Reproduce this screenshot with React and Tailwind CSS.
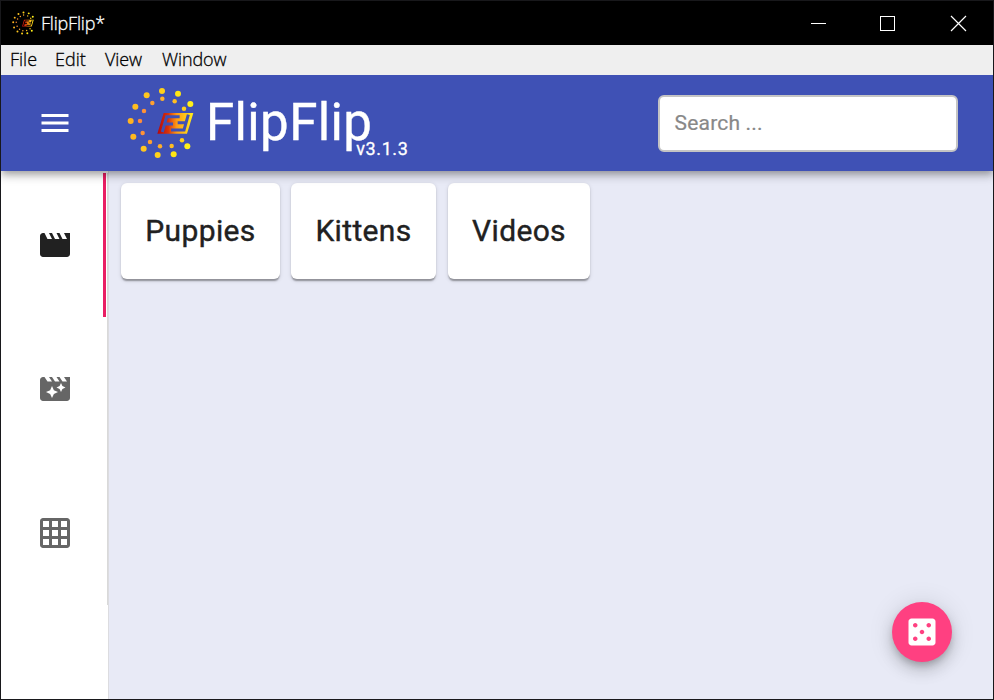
const OUTER = [[156, 39, '#ffd11a'], [204, 47, '#ffe614'], [241, 78, '#fff01a'], [232, 205, '#fff01a'], [191, 229, '#ffe614'], [143, 231, '#ffd11a'], [101, 212, '#ffc61f'], [70, 176, '#ffb91f'], [62, 129, '#ffb320'], [76, 86, '#ffbc1f'], [110, 52, '#ffc61f']];
const INNER = [[157, 62, '#ffb32a'], [194, 70, '#ffbe22'], [222, 92, '#ffd01c'], [216, 187, '#ffd01c'], [185, 204, '#ffbe22'], [150, 205, '#ffae2a'], [120, 192, '#ffa030'], [98, 165, '#ff9236'], [90, 129, '#ff8c3a'], [102, 99, '#ff9236'], [127, 75, '#ffa030']];

function Logo({ className, id, cut }) {
  return (
    <svg viewBox="51 27 201 216" className={className}>
      <defs>
        <linearGradient id={id} gradientUnits="userSpaceOnUse" x1="145" y1="0" x2="245" y2="0">
          <stop offset="0" stopColor="#b80a0a" />
          <stop offset="0.3" stopColor="#d8330c" />
          <stop offset="0.55" stopColor="#ff9a14" />
          <stop offset="1" stopColor="#ffe81c" />
        </linearGradient>
      </defs>
      {OUTER.map(([x, y, c]) => <circle key={x} cx={x} cy={y} r="9" fill={c} />)}
      {INNER.map(([x, y, c]) => <circle key={x} cx={x} cy={y} r="6.7" fill={c} />)}
      <path d="M161 105H250L231 167H142Z" fill={'url(#' + id + ')'} />
      <g fill="none" stroke={cut} strokeWidth="9">
        <path d="M157 162L170 116H209M164 138H189" />
        <path d="M235 110L222 156H183M228 134H203" />
      </g>
    </svg>
  );
}

function Icon({ d, className }) {
  return <svg viewBox="0 0 24 24" className={'size-9 fill-current ' + className}><path d={d} /></svg>;
}

const MENU = 'M3 18h18v-2H3v2zm0-5h18v-2H3v2zm0-7v2h18V6H3z';
const MOVIE = 'M18 4l2 4h-3l-2-4h-2l2 4h-3l-2-4H8l2 4H7L5 4H4c-1.1 0-1.99.9-1.99 2L2 18c0 1.1.9 2 2 2h16c1.1 0 2-.9 2-2V4h-4z';
const FILTER = 'M18 4l2 3h-3l-2-3h-2l2 3h-3l-2-3H8l2 3H7L5 4H4c-1.1 0-1.99.9-1.99 2L2 18c0 1.1.9 2 2 2h16c1.1 0 2-.9 2-2V4h-4zm-6.75 11.25L10 18l-1.25-2.75L6 14l2.75-1.25L10 10l1.25 2.75L14 14l-2.75 1.25zm5.69-3.31L16 14l-.94-2.06L13 11l2.06-.94L16 8l.94 2.06L19 11l-2.06.94z';
const GRID = 'M20 2H4c-1.1 0-2 .9-2 2v16c0 1.1.9 2 2 2h16c1.1 0 2-.9 2-2V4c0-1.1-.9-2-2-2zM8 20H4v-4h4v4zm0-6H4v-4h4v4zm0-6H4V4h4v4zm6 12h-4v-4h4v4zm0-6h-4v-4h4v4zm0-6h-4V4h4v4zm6 12h-4v-4h4v4zm0-6h-4v-4h4v4zm0-6h-4V4h4v4z';
const CASINO = 'M19 3H5c-1.1 0-2 .9-2 2v14c0 1.1.9 2 2 2h14c1.1 0 2-.9 2-2V5c0-1.1-.9-2-2-2zM7.5 18c-.83 0-1.5-.67-1.5-1.5S6.67 15 7.5 15s1.5.67 1.5 1.5S8.33 18 7.5 18zm0-9C6.67 9 6 8.33 6 7.5S6.67 6 7.5 6 9 6.67 9 7.5 8.33 9 7.5 9zm4.5 4.5c-.83 0-1.5-.67-1.5-1.5s.67-1.5 1.5-1.5 1.5.67 1.5 1.5-.67 1.5-1.5 1.5zm4.5 4.5c-.83 0-1.5-.67-1.5-1.5s.67-1.5 1.5-1.5 1.5.67 1.5 1.5-.67 1.5-1.5 1.5zm0-9c-.83 0-1.5-.67-1.5-1.5S15.67 6 16.5 6s1.5.67 1.5 1.5S17.33 9 16.5 9z';

function TitleBar() {
  return (
    <div className="flex h-11 shrink-0 items-center bg-black pl-[11px] text-white">
      <Logo id="small" cut="#000" className="h-6 w-[22px]" />
      <span className="ml-[7px] text-[18px] leading-6 font-light tracking-[-0.2px] [-webkit-text-stroke:0.3px_white]">FlipFlip*</span>
      <svg viewBox="0 0 160 18" className="mr-[25px] ml-auto h-[18px] w-[160px] fill-none stroke-white" shapeRendering="crispEdges">
        <path d="M3 9.5h15M72.5 2.5h14v14h-14z" />
        <path d="M143 2l15 15M158 2l-15 15" shapeRendering="auto" strokeWidth="1.2" />
      </svg>
    </div>
  );
}

function MenuBar() {
  return (
    <div className="z-30 flex h-[30px] shrink-0 items-center bg-[#efefef] pb-[2px] pl-[9px] text-[18px] leading-6 font-light text-black [-webkit-text-stroke:0.3px_black]">
      <span className="w-[45px]">File</span>
      <span className="w-[50px]">Edit</span>
      <span className="w-[57px] tracking-[-0.1px]">View</span>
      <span className="tracking-[-0.1px]">Window</span>
    </div>
  );
}

function AppBar() {
  return (
    <header className="z-20 flex h-24 shrink-0 items-center bg-[#3f51b5] pr-[35px] pl-9 font-[Roboto,sans-serif] text-white shadow-[0_3px_6px_-1.5px_rgba(0,0,0,0.2),0_6px_7.5px_rgba(0,0,0,0.14),0_1.5px_15px_rgba(0,0,0,0.12)]">
      <Icon d={MENU} className="" />
      <Logo id="big" cut="#3f51b5" className="ml-[54px] h-[72px] w-[67px]" />
      <h1 className="ml-[12px] text-[51px] leading-[60px] tracking-[0.375px] [-webkit-text-stroke:0.4px_white]">FlipFlip</h1>
      <span className="mt-[52px] -ml-4 text-[18px] leading-6 tracking-[0.6px] [-webkit-text-stroke:0.3px_white]">v3.1.3</span>
      <div className="ml-auto flex h-[57px] w-[300px] items-center rounded-md border-2 border-[#c4c4c4] bg-white pt-px pl-[14.5px] text-[21px] tracking-[0.2px] text-[#888] [-webkit-text-stroke:0.2px_#888]">Search ...</div>
    </header>
  );
}

function SideTab({ d, active }) {
  return (
    <div className={active ? 'mr-px flex h-36 items-center border-r-[3px] border-[#e91e63] pl-9 text-[#212121]' : 'flex h-36 items-center pl-9 text-[#666]'}>
      <Icon d={d} className="" />
    </div>
  );
}

function Scene({ name, className }) {
  return (
    <div className={'flex h-24 items-center justify-center rounded-md bg-white pb-[2px] text-[30px] tracking-[0.35px] text-[#212121] shadow-[0_3px_1.5px_-1.5px_rgba(0,0,0,0.2),0_1.5px_1.5px_rgba(0,0,0,0.14),0_1.5px_4.5px_rgba(0,0,0,0.12)] [-webkit-text-stroke:0.4px_#212121] ' + className}>
      <span>{name}</span>
    </div>
  );
}

export default function App() {
  return (
    <div className="flex h-[700px] w-[994px] flex-col overflow-hidden border border-[#18181b] bg-white font-['Open_Sans',sans-serif]">
      <TitleBar />
      <MenuBar />
      <AppBar />
      <div className="flex min-h-0 flex-1 font-[Roboto,sans-serif]">
        <aside className="w-[108px] shrink-0 border-r border-[#dcdce0] bg-white pt-[2px]">
          <nav className="h-[432px] border-r border-[#d9d9d9]">
            <SideTab d={MOVIE} active />
            <SideTab d={FILTER} />
            <SideTab d={GRID} />
          </nav>
        </aside>
        <main className="relative flex flex-1 items-start bg-[#e8eaf6] pt-3 pl-3">
          <Scene name="Puppies" className="w-[159px]" />
          <Scene name="Kittens" className="ml-[11px] w-[145px]" />
          <Scene name="Videos" className="ml-3 w-[142px]" />
          <button className="absolute right-[41px] bottom-[37px] flex size-[60px] items-center justify-center rounded-full bg-[#ff4081] text-white shadow-[0_4.5px_7.5px_-1.5px_rgba(0,0,0,0.2),0_9px_15px_rgba(0,0,0,0.14),0_1.5px_27px_rgba(0,0,0,0.12)]">
            <Icon d={CASINO} className="" />
          </button>
        </main>
      </div>
    </div>
  );
}
